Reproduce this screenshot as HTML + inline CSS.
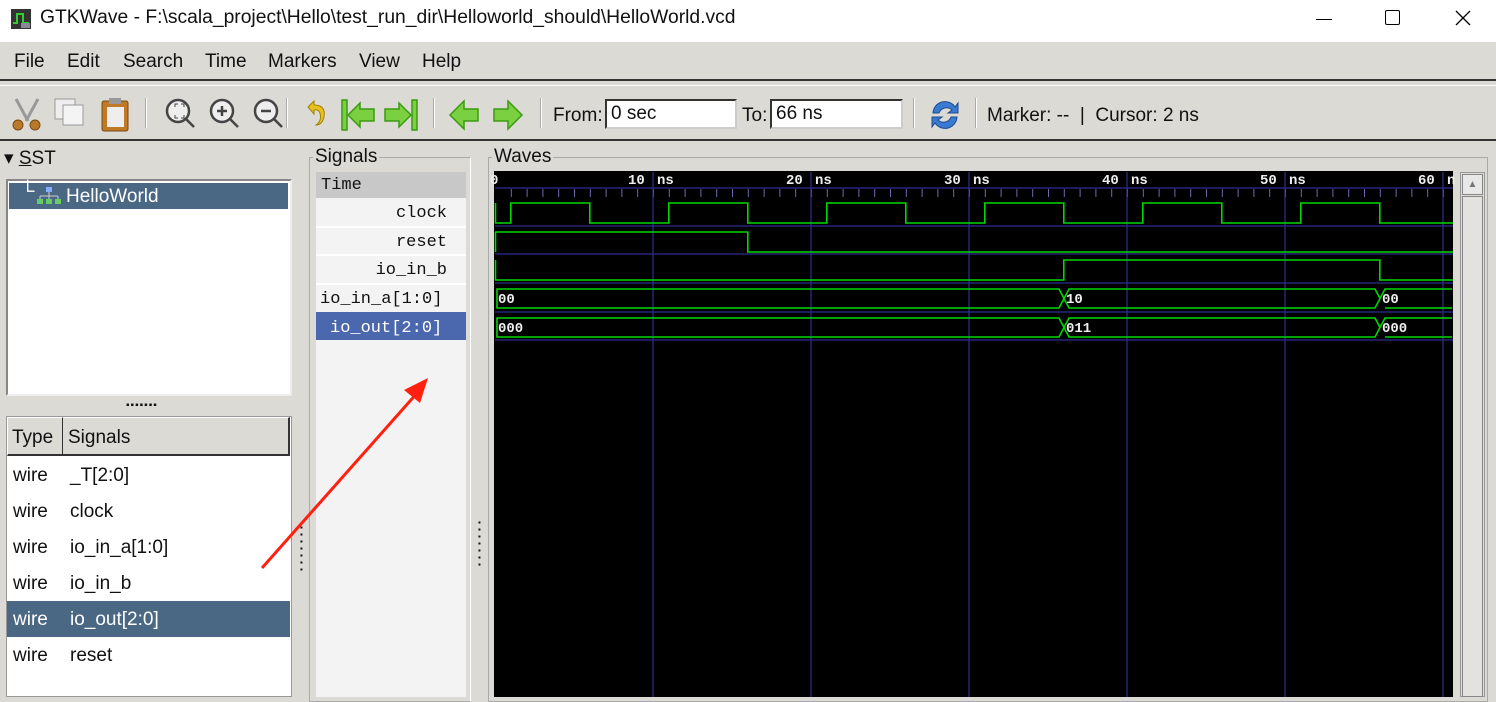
<!DOCTYPE html>
<html><head><meta charset="utf-8"><style>
*{margin:0;padding:0;box-sizing:border-box}
body{width:1496px;height:697px;overflow:hidden;background:#dcdad5;font-family:"Liberation Sans",sans-serif;position:relative;color:#111}
.abs{position:absolute}
.title{left:0;top:0;width:1496px;height:42px;background:#fff;font-size:19.3px}
.menu{left:0;top:42px;width:1496px;height:39px;background:#dcdad5;border-bottom:2px solid #333;font-size:19px}
.menu span{position:absolute;top:9px}
.tool{left:0;top:85px;width:1496px;height:56px;border-bottom:2px solid #333;border-top:1px solid #fff;font-size:19px}
.sep{position:absolute;top:98px;width:2px;height:30px;background:#aaa;border-right:1px solid #fff}
.inp{position:absolute;top:99px;height:30px;background:#fff;border:2px solid #333;border-right-color:#ccc;border-bottom-color:#ccc;font-size:19px;padding:2px 4px}
.mono{font-family:"Liberation Mono","DejaVu Sans Mono",monospace}
</style></head><body>
<div class="abs title">
 <svg class="abs" style="left:11px;top:9px" width="20" height="20"><rect x="0" y="0" width="20" height="20" fill="#333"/><path d="M2 14 H6 V5 H12 V14 H18" stroke="#3c3" stroke-width="2" fill="none"/><rect x="10" y="14" width="9" height="5" fill="#889"/></svg>
 <div class="abs" style="left:40px;top:7px">GTKWave - F:\scala_project\Hello\test_run_dir\Helloworld_should\HelloWorld.vcd</div>
 <div class="abs" style="left:1316px;top:19px;width:16px;height:1px;background:#000"></div>
 <div class="abs" style="left:1385px;top:10px;width:15px;height:15px;border:1.5px solid #000;border-radius:2px"></div>
 <svg class="abs" style="left:1455px;top:10px" width="16" height="16"><path d="M1 1L15 15M15 1L1 15" stroke="#000" stroke-width="1.3"/></svg>
</div>
<div class="abs menu">
 <span style="left:14px">File</span><span style="left:67px">Edit</span><span style="left:123px">Search</span><span style="left:205px">Time</span><span style="left:268px">Markers</span><span style="left:359px">View</span><span style="left:422px">Help</span>
</div>
<div class="abs tool"></div>
<svg class="abs" style="left:8px;top:95px" width="480" height="40">
 <g><path d="M8 4 L20 26 M30 4 L18 26" stroke="#999" stroke-width="3"/><circle cx="10" cy="30" r="5" fill="#b87a2a" stroke="#7a4a10"/><circle cx="27" cy="30" r="5" fill="#b87a2a" stroke="#7a4a10"/></g>
 <g><rect x="47" y="4" width="20" height="20" fill="#eee" stroke="#999"/><rect x="55" y="10" width="20" height="20" fill="#f4f4f4" stroke="#999"/></g>
 <g><rect x="94" y="6" width="26" height="30" rx="2" fill="#c07a25" stroke="#7a4a10"/><rect x="99" y="12" width="17" height="20" fill="#eee"/><rect x="101" y="3" width="12" height="6" fill="#999"/></g>
 <g fill="none" stroke="#444" stroke-width="2.5"><circle cx="170" cy="16" r="11" fill="#eee"/><path d="M178 24 L186 32"/><circle cx="214" cy="16" r="11" fill="#eee"/><path d="M222 24 L230 32 M209 16 H219 M214 11 V21"/><circle cx="258" cy="16" r="11" fill="#eee"/><path d="M266 24 L274 32 M253 16 H263"/></g>
 <path d="M167 12 v-3 h3 M173 9 h3 v3 M176 20 v3 h-3 M167 20 v3 h3" stroke="#444" fill="none"/>
 <path d="M300 12 L306 6 L306 10 Q318 10 316 22 Q314 30 308 30 Q314 26 312 18 Q310 14 306 15 L306 19 Z" fill="#e8c020" stroke="#a08000"/>
 <g fill="#7ad040" stroke="#3a9a10" stroke-width="1.5"><rect x="334" y="5" width="5" height="30"/><path d="M340 20 L352 8 V14 H366 V26 H352 V32 Z"/><rect x="404" y="5" width="5" height="30"/><path d="M403 20 L391 8 V14 H377 V26 H391 V32 Z"/>
 <path d="M442 20 L456 6 V14 H470 V26 H456 V34 Z"/></g>
</svg>
<svg class="abs" style="left:490px;top:95px" width="40" height="40"><path d="M4 20 L18 6 V14 H32 V26 H18 V34 Z" fill="#7ad040" stroke="#3a9a10" stroke-width="1.5" transform="translate(36 0) scale(-1 1)"/></svg>
<div class="sep" style="left:145px"></div><div class="sep" style="left:286px"></div><div class="sep" style="left:433px"></div><div class="sep" style="left:540px"></div><div class="sep" style="left:913px"></div><div class="sep" style="left:975px"></div>
<div class="abs" style="left:553px;top:105px;font-size:19px">From:</div>
<div class="inp" style="left:605px;width:132px">0 sec</div>
<div class="abs" style="left:742px;top:105px;font-size:19px">To:</div>
<div class="inp" style="left:770px;width:133px">66 ns</div>
<svg class="abs" style="left:929px;top:99px" width="32" height="32"><path d="M4 14 A12 12 0 0 1 26 8 L29 4 V14 H19 L23 11 A8 8 0 0 0 10 14 Z" fill="#3a7ad0" stroke="#1a4a90"/><path d="M28 18 A12 12 0 0 1 6 24 L3 28 V18 H13 L9 21 A8 8 0 0 0 22 18 Z" fill="#3a7ad0" stroke="#1a4a90"/></svg>
<div class="abs" style="left:987px;top:105px;font-size:19px">Marker: --&nbsp; |&nbsp; Cursor: 2 ns</div>

<div class="abs" style="left:4px;top:147px;font-size:19px">▾ <u>S</u>ST</div>
<div class="abs" style="left:6px;top:179px;width:286px;height:217px;background:#fff;border:2px solid #888;border-right-color:#eee;border-bottom-color:#eee"></div>
<div class="abs" style="left:9px;top:183px;width:279px;height:26px;background:#4a6784;color:#fff;font-size:19px">
 <span class="abs" style="left:12px;top:-2px">└</span>
 <svg class="abs" style="left:28px;top:4px" width="24" height="18"><rect x="9" y="0" width="6" height="5" fill="#8af"/><path d="M12 5V9M3 9H21M3 9V12M12 9V12M21 9V12" stroke="#ccc"/><rect x="0" y="12" width="6" height="5" fill="#6c6"/><rect x="9" y="12" width="6" height="5" fill="#6c6"/><rect x="18" y="12" width="6" height="5" fill="#6c6"/></svg>
 <span class="abs" style="left:57px;top:3px">HelloWorld</span></div>
<div class="abs" style="left:126px;top:400px;font-size:10px;letter-spacing:1px">▪▪▪▪▪▪▪</div>
<div class="abs" style="left:6px;top:416px;width:286px;height:281px;background:#fff;border:1px solid #999"></div>
<div class="abs" style="left:7px;top:417px;width:56px;height:39px;background:#dcdad5;border:1px solid #fff;border-right:1px solid #333;border-bottom:2px solid #333;font-size:19px;padding:9px 4px">Type</div>
<div class="abs" style="left:63px;top:417px;width:227px;height:39px;background:#dcdad5;border-top:1px solid #fff;border-right:2px solid #333;border-bottom:2px solid #333;font-size:19px;padding:9px 5px">Signals</div>
<div class="abs" style="left:7px;top:601px;width:283px;height:36px;background:#4a6784"></div>
<div class="abs" style="left:13px;top:458px;font-size:19px;line-height:36px">wire<br>wire<br>wire<br>wire<br><span style="color:#fff">wire</span><br>wire</div>
<div class="abs" style="left:70px;top:458px;font-size:19px;line-height:36px">_T[2:0]<br>clock<br>io_in_a[1:0]<br>io_in_b<br><span style="color:#fff">io_out[2:0]</span><br>reset</div>
<div class="abs" style="left:300px;top:524px;font-size:8px;line-height:7px">▪<br>▪<br>▪<br>▪<br>▪<br>▪<br>▪</div>
<div class="abs" style="left:478px;top:519px;font-size:8px;line-height:7px">▪<br>▪<br>▪<br>▪<br>▪<br>▪<br>▪</div>

<div class="abs" style="left:309px;top:157px;width:162px;height:545px;border:1px solid #aaa;border-right-color:#fff"></div>
<div class="abs" style="left:313px;top:146px;font-size:19px;background:#dcdad5;padding:0 2px">Signals</div>
<div class="abs" style="left:316px;top:172px;width:150px;height:525px;background:#f3f3f3"></div>
<div class="abs mono" style="left:316px;top:172px;width:150px;height:26px;background:#c8c8c8;font-size:17px;padding:4px 5px">Time</div>
<div class="abs" style="left:316px;top:226px;width:150px;height:2px;background:#fff"></div>
<div class="abs" style="left:316px;top:254px;width:150px;height:2px;background:#fff"></div>
<div class="abs" style="left:316px;top:283px;width:150px;height:2px;background:#fff"></div>
<div class="abs" style="left:316px;top:312px;width:150px;height:28px;background:#4b67ad"></div>
<div class="abs mono" style="left:316px;top:200px;width:131px;text-align:right;font-size:17px;line-height:28.5px">clock<br>reset<br>io_in_b</div>
<div class="abs mono" style="left:320px;top:286px;font-size:17px;line-height:28.5px">io_in_a[1:0]<br><span style="color:#fff;padding-left:10px">io_out[2:0]</span></div>

<div class="abs" style="left:488px;top:157px;width:1000px;height:545px;border:1px solid #aaa"></div>
<div class="abs" style="left:492px;top:146px;font-size:19px;background:#dcdad5;padding:0 2px">Waves</div>
<div class="abs" style="left:1460px;top:172px;width:25px;height:525px;background:#dcdad5;border:1px solid #999"></div>
<div class="abs" style="left:1462px;top:174px;width:21px;height:21px;border:1px solid #888;background:#e8e8e8;font-size:10px;color:#777;text-align:center;line-height:19px">▲</div>
<div class="abs" style="left:1462px;top:196px;width:21px;height:501px;border:1px solid #888;background:#e4e2de"></div>
<svg class="abs" style="left:0;top:0" width="1496" height="697">
 <defs><pattern id="tk" x="495" y="0" width="15.8" height="697" patternUnits="userSpaceOnUse"><rect x="0" y="0" width="1" height="697" fill="#6a6ab0"/></pattern></defs>
 <rect x="494" y="171" width="959" height="526" fill="#000"/>
 <rect x="496" y="189" width="957" height="8" fill="url(#tk)"/>
 <g stroke="#2e2e90" stroke-width="1.2">
  <path d="M495 188H1453M495 226H1453M495 254H1453M495 283H1453M495 312H1453M495 340H1453"/>
  <path d="M653 172V697M811 172V697M969 172V697M1127 172V697M1285 172V697M1443 172V697"/>
 </g>
 <g font-family="Liberation Mono,DejaVu Sans Mono,monospace" font-size="14" fill="#eee" font-weight="bold">
  <text x="490" y="184">0</text>
  <text x="628" y="184">10</text><text x="657" y="184">ns</text>
  <text x="786" y="184">20</text><text x="815" y="184">ns</text>
  <text x="944" y="184">30</text><text x="973" y="184">ns</text>
  <text x="1102" y="184">40</text><text x="1131" y="184">ns</text>
  <text x="1260" y="184">50</text><text x="1289" y="184">ns</text>
  <text x="1418" y="184">60</text><text x="1447" y="184">n</text>
 </g>
 <g fill="none" stroke="#00d800" stroke-width="1.6">
  <path d="M495.5 203V223H510.8V203H589.8V223H668.8V203H747.8V223H826.8V203H905.8V223H984.8V203H1063.8V223H1142.8V203H1221.8V223H1300.8V203H1379.8V223H1453"/>
  <path d="M495.5 232V252M495 232H747.8V252H1453"/>
  <path d="M495.5 260V280M495 280H1063.8V260H1379.8V280H1453"/>
  <path d="M497 289H1059L1064 298.5L1059 308H497ZM1064 298.5L1069 289H1375L1380 298.5L1375 308H1069ZM1380 298.5L1385 289H1452M1385 308H1452"/>
  <path d="M497 318H1059L1064 327.5L1059 337H497ZM1064 327.5L1069 318H1375L1380 327.5L1375 337H1069ZM1380 327.5L1385 318H1452M1385 337H1452"/>
 </g>
 <g font-family="Liberation Mono,DejaVu Sans Mono,monospace" font-size="14" fill="#eee" font-weight="bold">
  <text x="498" y="303">00</text><text x="1066" y="303">10</text><text x="1382" y="303">00</text>
  <text x="498" y="332">000</text><text x="1066" y="332">011</text><text x="1382" y="332">000</text>
 </g>
 <path d="M262 568 L418 392" stroke="#ff2010" stroke-width="3"/>
 <path d="M428 378 L404 390 L420 403 Z" fill="#ff2010"/>
</svg>
</body></html>
